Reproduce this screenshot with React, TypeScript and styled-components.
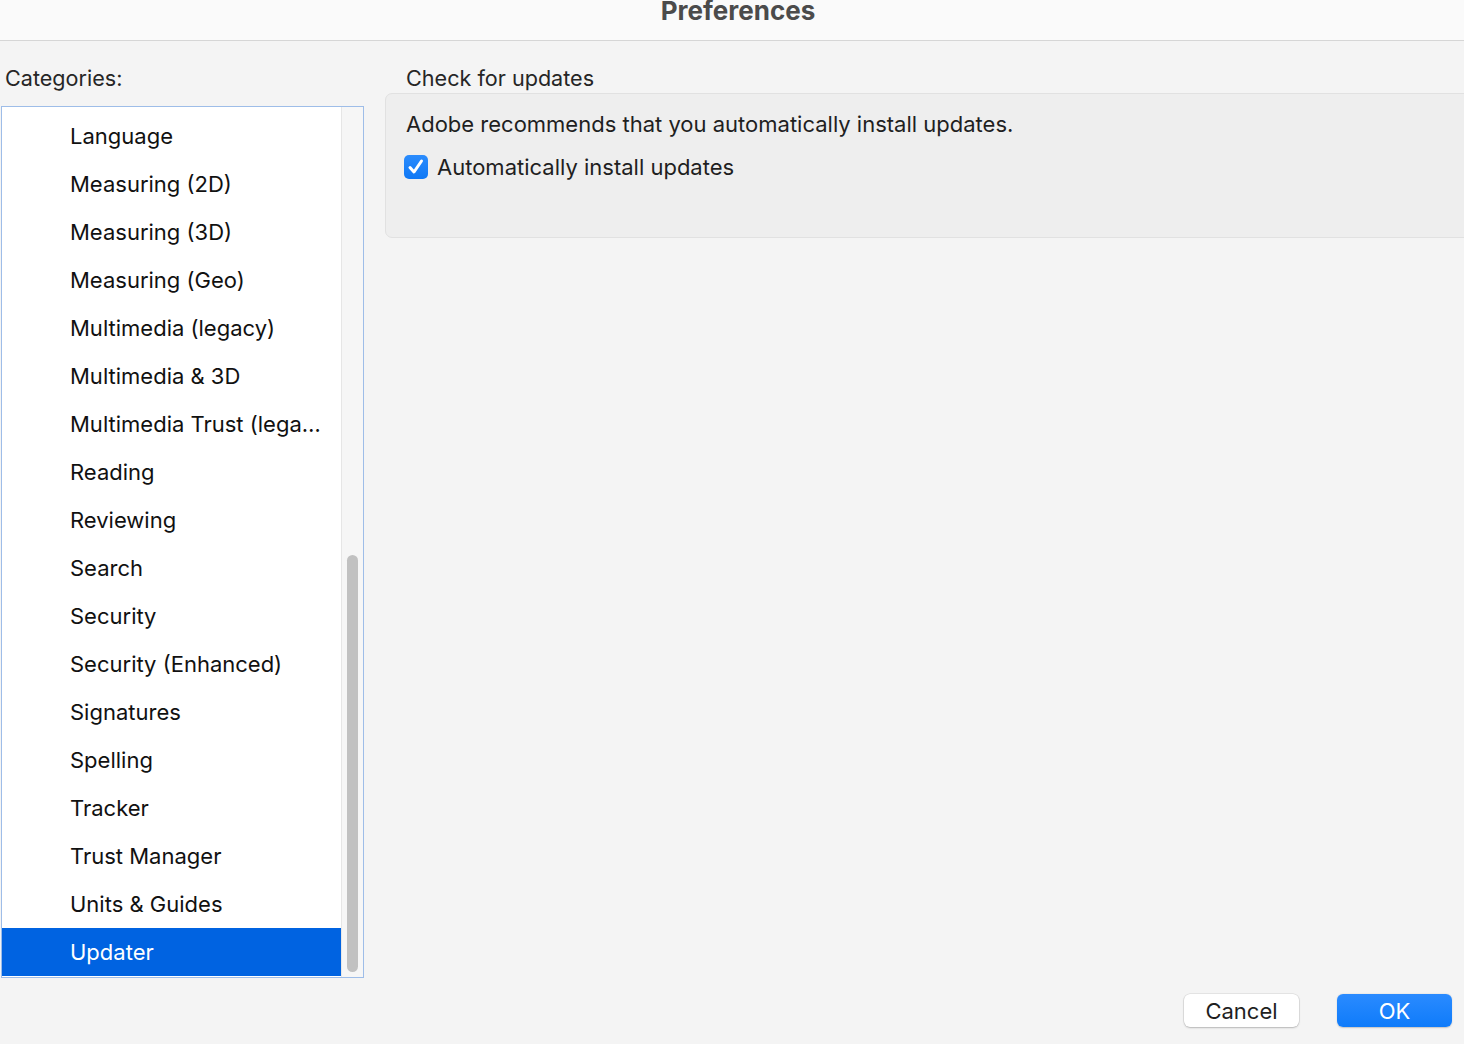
import React from "react";
import styled, { createGlobalStyle } from "styled-components";

const Global = createGlobalStyle`
  html, body { margin: 0; padding: 0; background: #f4f4f4; }
  body { font-family: Inter, "Helvetica Neue", Arial, sans-serif; -webkit-font-smoothing: antialiased; }
  * { box-sizing: border-box; }
`;

const Window = styled.div`
  width: 1464px;
  height: 1044px;
  display: flex;
  flex-direction: column;
  background: #f4f4f4;
  overflow: hidden;
`;

const TitleBar = styled.div`
  height: 41px;
  flex: none;
  background: #fafafa;
  border-bottom: 1px solid #d6d6d6;
  display: flex;
  justify-content: center;
  align-items: flex-start;
`;

const Title = styled.div`
  font-size: 26px;
  font-weight: 700;
  color: #4b4b4b;
  line-height: 24px;
  margin-top: -1px;
  margin-left: 12px;
`;

const Body = styled.div`
  flex: 1;
  display: flex;
  padding: 24px 0 0 1px;
  position: relative;
`;

const Left = styled.div`
  width: 363px;
  flex: none;
  display: flex;
  flex-direction: column;
`;

const Label = styled.div<{ $indent?: number; $gap?: number }>`
  font-size: 21.6px;
  color: #262626;
  height: 26px;
  line-height: 26px;
  margin-left: ${(p) => p.$indent ?? 0}px;
  margin-bottom: ${(p) => p.$gap ?? 15}px;
`;

const ListBox = styled.div`
  height: 872px;
  border: 1px solid #9ebde8;
  background: #ffffff;
  display: flex;
`;

const List = styled.div`
  flex: 1;
  padding-top: 5px;
  display: flex;
  flex-direction: column;
`;

const Item = styled.div<{ $selected?: boolean }>`
  height: 48px;
  flex: none;
  display: flex;
  align-items: center;
  padding-left: 68px;
  font-size: 22px;
  color: ${(p) => (p.$selected ? "#ffffff" : "#111111")};
  background: ${(p) => (p.$selected ? "#0063e1" : "transparent")};
  white-space: nowrap;
`;

const ScrollTrack = styled.div`
  width: 22px;
  flex: none;
  background: #f6f6f6;
  border-left: 1px solid #e6e6e6;
  display: flex;
  flex-direction: column;
  justify-content: flex-end;
  padding: 0 5px 5px 5px;
`;

const Thumb = styled.div`
  height: 417px;
  border-radius: 6px;
  background: #c1c1c1;
`;

const Right = styled.div`
  flex: 1;
  display: flex;
  flex-direction: column;
  margin-left: 21px;
`;

const Group = styled.div`
  margin-right: -10px;
  height: 145px;
  background: #eeeeee;
  border: 1px solid #e1e1e1;
  border-radius: 7px;
  padding: 17px 20px;
  display: flex;
  flex-direction: column;
  gap: 17px;
`;

const Text = styled.div`
  font-size: 22px;
  color: #1f1f1f;
  line-height: 26px;
`;

const CheckRow = styled.label`
  display: flex;
  align-items: center;
  gap: 9px;
  font-size: 22px;
  line-height: 26px;
  color: #1f1f1f;
  margin-left: -2px;
`;

const CheckBox = styled.span`
  width: 24px;
  height: 24px;
  border-radius: 5px;
  background: linear-gradient(#2b8cfd, #0f78f5);
  display: flex;
  align-items: center;
  justify-content: center;
`;

const Footer = styled.div`
  position: absolute;
  right: 12px;
  bottom: 17px;
  display: flex;
  gap: 38px;
`;

const Button = styled.button<{ $primary?: boolean }>`
  width: 115px;
  height: 33px;
  border-radius: 6px;
  font-family: inherit;
  font-size: 22px;
  border: none;
  color: ${(p) => (p.$primary ? "#ffffff" : "#1f1f1f")};
  background: ${(p) => (p.$primary ? "linear-gradient(#2a8bff, #0f7bfa)" : "#ffffff")};
  box-shadow: ${(p) =>
    p.$primary
      ? "0 0.5px 1.5px rgba(0,0,0,0.2)"
      : "0 0 0 0.5px rgba(0,0,0,0.12), 0 1px 2px rgba(0,0,0,0.2)"};
  padding: 0;
`;

const items = [
  "Language",
  "Measuring (2D)",
  "Measuring (3D)",
  "Measuring (Geo)",
  "Multimedia (legacy)",
  "Multimedia & 3D",
  "Multimedia Trust (lega…",
  "Reading",
  "Reviewing",
  "Search",
  "Security",
  "Security (Enhanced)",
  "Signatures",
  "Spelling",
  "Tracker",
  "Trust Manager",
  "Units & Guides",
  "Updater",
];

export default function App() {
  return (
    <Window>
      <Global />
      <TitleBar>
        <Title>Preferences</Title>
      </TitleBar>
      <Body>
        <Left>
          <Label $indent={4}>Categories:</Label>
          <ListBox>
            <List>
              {items.map((it) => (
                <Item key={it} $selected={it === "Updater"}>
                  {it}
                </Item>
              ))}
            </List>
            <ScrollTrack>
              <Thumb />
            </ScrollTrack>
          </ListBox>
        </Left>
        <Right>
          <Label $indent={21} $gap={2}>Check for updates</Label>
          <Group>
            <Text>Adobe recommends that you automatically install updates.</Text>
            <CheckRow>
              <CheckBox>
                <svg width="24" height="24" viewBox="0 0 24 24">
                  <path d="M6 12.5 L10 17 L17.5 6" fill="none" stroke="#fff" strokeWidth="3" strokeLinecap="round" strokeLinejoin="round" />
                </svg>
              </CheckBox>
              Automatically install updates
            </CheckRow>
          </Group>
        </Right>
        <Footer>
          <Button>Cancel</Button>
          <Button $primary>OK</Button>
        </Footer>
      </Body>
    </Window>
  );
}
